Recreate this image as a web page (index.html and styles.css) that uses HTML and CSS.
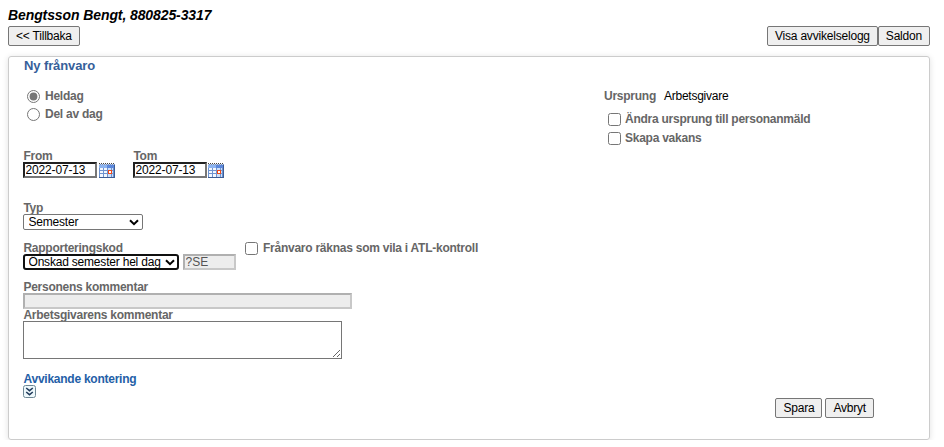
FILE: index.html
```html
<!DOCTYPE html>
<html lang="sv">
    <head>
        <meta charset="utf-8">
        <title>Ny frånvaro</title>
        <link rel="stylesheet" href="styles.css">
    </head>
    <body>
        <svg class="defs" width="0" height="0">
            <symbol id="calendar" viewBox="0 0 16 15" shape-rendering="crispEdges">
                <rect y="1" width="16" height="14" fill="#6a90d0"/>
                <path d="M0 .5h16" stroke="#444" stroke-dasharray="1 1"/>
                <path d="M0 1.500h16" stroke="#c9ccd2" stroke-dasharray="1 1"/>
                <rect y="2" width="15" height="3" fill="#8db4f0"/>
                <rect x="8" y="2" width="7" height="3" fill="#5c88dc"/>
                <path d="M1 5h13v9H1z" fill="#f4f8ff"/>
                <path d="M9 5h5v9H9z" fill="#cfdff8"/>
                <path d="M1 7.500h13M1 10.500h13M4.500 5v9M8.500 5v9M12.500 5v9" stroke="#6f93cf" fill="none"/>
                <path d="M15.500 2v13M0 14.500h16" stroke="#3e5d94"/>
                <rect x="9.500" y="7.500" width="3" height="3" fill="#fff" stroke="#f04a18"/>
            </symbol>
        </svg>
        <h1>Bengtsson Bengt, 880825-3317</h1>
        <div class="toolbar">
            <button>&lt;&lt; Tillbaka</button>
            <div class="actions">
                <button>Visa avvikelselogg</button><button>Saldon</button>
            </div>
        </div>
        <form class="panel">
            <h2>Ny frånvaro</h2>
            <div class="columns">
                <div class="main">
                    <div class="extent">
                        <label><input type="radio" name="extent" checked>Heldag</label>
                        <label><input type="radio" name="extent">Del av dag</label>
                    </div>
                    <div class="dates">
                        <div class="field">
                            <label for="from">From</label>
                            <div class="line">
                                <input type="text" class="date" id="from" value="2022-07-13">
                                <svg class="cal"><use href="#calendar"/></svg>
                            </div>
                        </div>
                        <div class="field">
                            <label for="tom">Tom</label>
                            <div class="line">
                                <input type="text" class="date" id="tom" value="2022-07-13">
                                <svg class="cal"><use href="#calendar"/></svg>
                            </div>
                        </div>
                    </div>
                    <div class="field type">
                        <label for="type">Typ</label>
                        <div class="select">
                            <select id="type"><option>Semester</option></select>
                            <svg class="arrow" viewBox="0 0 10 7"><path d="M1 1.200l4 4 4-4"/></svg>
                        </div>
                    </div>
                    <div class="report">
                        <div class="field">
                            <label for="code">Rapporteringskod</label>
                            <div class="line">
                                <div class="select focus">
                                    <select id="code"><option>Önskad semester hel dag</option></select>
                                    <svg class="arrow" viewBox="0 0 10 7"><path d="M1 1.200l4 4 4-4"/></svg>
                                </div>
                                <input type="text" class="short" value="?SE" disabled>
                            </div>
                        </div>
                        <label class="check"><input type="checkbox">Frånvaro räknas som vila i ATL-kontroll</label>
                    </div>
                    <div class="field person">
                        <label for="person">Personens kommentar</label>
                        <input type="text" id="person" disabled>
                    </div>
                    <div class="field employer">
                        <label for="employer">Arbetsgivarens kommentar</label>
                        <textarea id="employer"></textarea>
                    </div>
                    <h3>Avvikande kontering</h3>
                    <svg class="expand" viewBox="0 0 13 13">
                        <rect x=".5" y=".5" width="12" height="12" rx="2" fill="#eef8fb" stroke="#6e8794"/>
                        <path d="M3.200 3l3.300 2.700L9.800 3M3.200 7l3.300 2.700L9.800 7" fill="none" stroke="#223c5c" stroke-width="1.500"/>
                    </svg>
                </div>
                <div class="origin">
                    <div class="source"><b>Ursprung</b><span>Arbetsgivare</span></div>
                    <label class="check"><input type="checkbox">Ändra ursprung till personanmäld</label>
                    <label class="check"><input type="checkbox">Skapa vakans</label>
                </div>
            </div>
            <div class="submit">
                <button type="button">Spara</button>
                <button type="button">Avbryt</button>
            </div>
        </form>
    </body>
</html>
```

FILE: styles.css
```css
*{
    box-sizing: border-box;
}
body{
    margin: 0;
    padding: 8px 14px 0 8px;
    background: #FFF;
    font: 12px/13px "Liberation Sans", Arial, sans-serif;
    letter-spacing: -.25px;
    color: #000;
}
.defs{
    position: absolute;
}
h1, h2, h3{
    margin: 0;
}
h1{
    height: 18px;
    font-size: 14px;
    line-height: 15px;
    font-style: italic;
    letter-spacing: -.1px;
}
h2{
    padding-left: 15px;
    font-size: 13px;
    line-height: 17px;
    letter-spacing: -.1px;
    color: #36609A;
}
h3{
    margin-top: 14px;
    padding-left: .5px;
    font-size: 12px;
    line-height: 13px;
    color: #2460A7;
}
input, select, textarea, button{
    margin: 0;
    font: 12px/13px "Liberation Sans", Arial, sans-serif;
}
button{
    height: 20px;
    padding: 0 7px;
    border: 1px solid #767676;
    border-radius: 2px;
    background: #EFEFEF;
    color: #000;
    letter-spacing: -.2px;
    white-space: nowrap;
}
.toolbar{
    display: flex;
    justify-content: space-between;
    margin-bottom: 10px;
}
.actions{
    display: flex;
}

.panel{
    height: 384px;
    border: 1px solid #CCC;
    border-radius: 3px;
    box-shadow: 0 1px 6px rgba(0, 0, 0, .12);
}
.columns{
    display: flex;
    height: 324px;
    padding: 13px 0 0 14px;
}
.main{
    width: 581px;
}
label, .source b{
    font-weight: bold;
    color: #666;
}
input[type="radio"], input[type="checkbox"]{
    flex: none;
    width: 13px;
    height: 13px;
    accent-color: #767676;
}
.extent{
    display: flex;
    flex-direction: column;
    padding-left: 4px;
    margin-bottom: 26px;
}
.extent label{
    display: flex;
    gap: 5px;
    height: 18px;
    padding-top: 3px;
    line-height: 12px;
}
.field{
    display: flex;
    flex-direction: column;
    align-items: flex-start;
}
.field > label{
    height: 13px;
    padding-left: .4px;
    line-height: 15px;
}
.line{
    display: flex;
}
.dates{
    display: flex;
    gap: 18px;
    margin-bottom: 23px;
}
input[type="text"]{
    height: 16px;
    padding: 0 0 1px .5px;
    border: 2px inset #767676;
}
input[type="text"]:disabled{
    border: 2px solid #C8C8C8;
    border-top-color: #B0B0B0;
    border-left-color: #B0B0B0;
    background: #EDEDED;
    color: #545454;
}
.date{
    width: 74px;
    letter-spacing: -.15px;
}
.cal{
    width: 16px;
    height: 15px;
    margin: 1px 0 0 2px;
}
.field + .field .cal{
    margin-left: 1px;
}
.select{
    display: grid;
    width: 120px;
    height: 16px;
}
.select select{
    grid-area: 1 / 1;
    width: 100%;
    height: 16px;
    padding: 0 4.5px;
    border: 1px solid #767676;
    border-radius: 2px;
    background: #FFF;
    color: #000;
    letter-spacing: -.2px;
    appearance: none;
    outline: none;
}
.arrow{
    grid-area: 1 / 1;
    place-self: center end;
    width: 10px;
    height: 7px;
    margin-right: 4px;
    fill: none;
    stroke: #000;
    stroke-width: 2;
    pointer-events: none;
}
.focus{
    width: 156px;
}
.focus select{
    padding: 0 3.5px;
    border: 2px solid #101010;
    border-radius: 3px;
}
.short{
    width: 53px;
    margin-left: 4px;
}
.type{
    margin-bottom: 11px;
}
.report{
    display: flex;
    gap: 9px;
    margin-bottom: 10px;
}
.check{
    display: flex;
    gap: 5px;
}
.report .check{
    padding-top: 1px;
    line-height: 12px;
}
.person{
    height: 28px;
}
#person{
    width: 329px;
}
textarea{
    width: 319px;
    height: 38px;
    border: 1px solid #767676;
}
.expand{
    display: block;
    width: 13px;
    height: 13px;
    margin-top: -1px;
}
.origin .source{
    display: flex;
    gap: 8px;
    margin: 3px 0 10px;
}
.origin .check{
    height: 19px;
    padding-left: 4px;
    gap: 4px;
}
.submit{
    display: flex;
    justify-content: flex-end;
    gap: 3px;
    padding-right: 55px;
}
```
